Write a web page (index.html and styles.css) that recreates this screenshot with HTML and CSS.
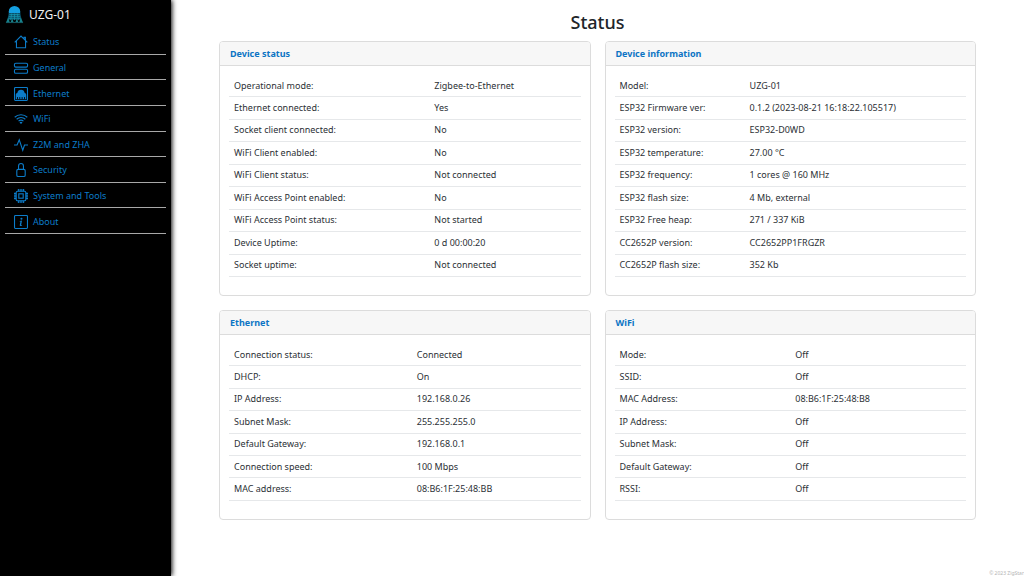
FILE: index.html
```html
<!DOCTYPE html>
<html lang="en">
<head>
<meta charset="utf-8">
<meta name="viewport" content="width=device-width, initial-scale=1">
<title>UZG-01 Status</title>
<link rel="stylesheet" href="styles.css">
</head>
<body>
<div class="app">
  <aside class="sidebar">
    <a class="brand" href="#">
      <svg class="brand-logo" viewBox="0 0 20 20" aria-hidden="true">
        <path d="M4 9V6.500a6 5.500 0 0 1 12 0V9z" fill="#149fe0"/>
        <path d="M4 8.500h12l1.500 7h-15z" fill="#0b4f68"/>
        <path d="M4.500 10h11M4 12h12M3.500 14h13M7 9l-1 7M10 9v7M13 9l1 7" stroke="#1595ad" stroke-width=".8" fill="none"/>
        <path d="M3.500 13L1 18.500h4zM16.500 13l2.500 5.500h-4zM7.500 14L6 18h3zM12.500 14l1.500 4h-3z" fill="#16808a"/>
        <path d="M1 18.500h18" stroke="#17606a"/>
      </svg>
      <span>UZG-01</span>
    </a>
    <nav>
      <ul class="menu">
        <li><a href="#"><svg class="icon" viewBox="0 0 16 16" aria-hidden="true"><path d="M.8 8.500L8 1.300l7.200 7.200M2.800 6.800V14.500h10.400V6.800M11.500 4.500V2.500h1.500v3.500"/></svg>Status</a></li>
        <li><a href="#"><svg class="icon" viewBox="0 0 16 16" aria-hidden="true"><rect x=".5" y="2.500" width="15" height="4.500" rx="1.500"/><rect x=".5" y="9.500" width="15" height="4.500" rx="1.500"/></svg>General</a></li>
        <li><a href="#"><svg class="icon" viewBox="0 0 16 16" aria-hidden="true"><rect x=".6" y=".6" width="14.800" height="14.800" rx="1"/><path class="solid" d="M2 14V9c0-1.300.8-2 1.800-2.200C4 4.300 5.800 3 8 3s4 1.300 4.200 3.800C13.200 7 14 7.700 14 9v5z"/><path class="cut" d="M4 11.500V14M6.600 11.500V14M9.300 11.500V14M12 11.500V14"/></svg>Ethernet</a></li>
        <li><a href="#"><svg class="icon" viewBox="0 0 16 16" aria-hidden="true"><path d="M.8 6a10.500 10.500 0 0 1 14.400 0M3 8.300a7.400 7.400 0 0 1 10 0M5.200 10.500a4.200 4.200 0 0 1 5.600 0"/><path class="solid" d="M6.300 12a2.400 2.400 0 0 1 3.400 0L8 13.800z"/></svg>WiFi</a></li>
        <li><a href="#"><svg class="icon" viewBox="0 0 16 16" aria-hidden="true"><path d="M0 8h3.500L6 2l4 12 2-6h4"/></svg>Z2M and ZHA</a></li>
        <li><a href="#"><svg class="icon" viewBox="0 0 16 16" aria-hidden="true"><rect x="3.200" y="7.300" width="9.600" height="8.200" rx="1.500"/><path d="M5.200 7.300V3.300a2.800 2.800 0 0 1 5.600 0v4"/></svg>Security</a></li>
        <li><a href="#"><svg class="icon" viewBox="0 0 16 16" aria-hidden="true"><rect x="2.500" y="2.500" width="11" height="11" rx="1.500"/><rect x="5.500" y="5.500" width="5" height="5"/><path d="M5 0v2.500M7 0v2.500M9 0v2.500M11 0v2.500M5 13.500V16M7 13.500V16M9 13.500V16M11 13.500V16M0 5h2.500M0 7h2.500M0 9h2.500M0 11h2.500M13.500 5H16M13.500 7H16M13.500 9H16M13.500 11H16"/></svg>System and Tools</a></li>
        <li><a href="#"><svg class="icon" viewBox="0 0 16 16" aria-hidden="true"><rect x=".6" y=".6" width="14.800" height="14.800" rx="1"/><path class="solid" d="M9.200 6.400l-1 4.700c-.1.400 0 .6.300.6.200 0 .5-.1.800-.3l-.1.800c-.3.300-.8.500-1.300.5-1 0-1.500-.4-1.300-1.300l.7-3.500c.1-.3 0-.4-.3-.5H6.400l.1-.6z"/><circle class="solid" cx="8.500" cy="4.200" r="1.200"/></svg>About</a></li>
      </ul>
    </nav>
  </aside>

  <main class="content">
    <h1 class="title">Status</h1>
    <div class="cards">
      <section class="card">
        <h2 class="card-header">Device status</h2>
        <div class="card-body">
          <table class="info info-tall">
            <colgroup><col class="label-wide"><col></colgroup>
            <tr><th scope="row">Operational mode:</th><td>Zigbee-to-Ethernet</td></tr>
            <tr><th scope="row">Ethernet connected:</th><td>Yes</td></tr>
            <tr><th scope="row">Socket client connected:</th><td>No</td></tr>
            <tr><th scope="row">WiFi Client enabled:</th><td>No</td></tr>
            <tr><th scope="row">WiFi Client status:</th><td>Not connected</td></tr>
            <tr><th scope="row">WiFi Access Point enabled:</th><td>No</td></tr>
            <tr><th scope="row">WiFi Access Point status:</th><td>Not started</td></tr>
            <tr><th scope="row">Device Uptime:</th><td>0 d 00:00:20</td></tr>
            <tr><th scope="row">Socket uptime:</th><td>Not connected</td></tr>
          </table>
        </div>
      </section>

      <section class="card">
        <h2 class="card-header">Device information</h2>
        <div class="card-body">
          <table class="info info-tall">
            <colgroup><col class="label-narrow"><col></colgroup>
            <tr><th scope="row">Model:</th><td>UZG-01</td></tr>
            <tr><th scope="row">ESP32 Firmware ver:</th><td>0.1.2 (2023-08-21 16:18:22.105517)</td></tr>
            <tr><th scope="row">ESP32 version:</th><td>ESP32-D0WD</td></tr>
            <tr><th scope="row">ESP32 temperature:</th><td>27.00 °C</td></tr>
            <tr><th scope="row">ESP32 frequency:</th><td>1 cores @ 160 MHz</td></tr>
            <tr><th scope="row">ESP32 flash size:</th><td>4 Mb, external</td></tr>
            <tr><th scope="row">ESP32 Free heap:</th><td>271 / 337 KiB</td></tr>
            <tr><th scope="row">CC2652P version:</th><td>CC2652PP1FRGZR</td></tr>
            <tr><th scope="row">CC2652P flash size:</th><td>352 Kb</td></tr>
          </table>
        </div>
      </section>

      <section class="card">
        <h2 class="card-header">Ethernet</h2>
        <div class="card-body">
          <table class="info">
            <colgroup><col class="label-medium"><col></colgroup>
            <tr><th scope="row">Connection status:</th><td>Connected</td></tr>
            <tr><th scope="row">DHCP:</th><td>On</td></tr>
            <tr><th scope="row">IP Address:</th><td>192.168.0.26</td></tr>
            <tr><th scope="row">Subnet Mask:</th><td>255.255.255.0</td></tr>
            <tr><th scope="row">Default Gateway:</th><td>192.168.0.1</td></tr>
            <tr><th scope="row">Connection speed:</th><td>100 Mbps</td></tr>
            <tr><th scope="row">MAC address:</th><td>08:B6:1F:25:48:BB</td></tr>
          </table>
        </div>
      </section>

      <section class="card">
        <h2 class="card-header">WiFi</h2>
        <div class="card-body">
          <table class="info">
            <colgroup><col class="label-half"><col></colgroup>
            <tr><th scope="row">Mode:</th><td>Off</td></tr>
            <tr><th scope="row">SSID:</th><td>Off</td></tr>
            <tr><th scope="row">MAC Address:</th><td>08:B6:1F:25:48:B8</td></tr>
            <tr><th scope="row">IP Address:</th><td>Off</td></tr>
            <tr><th scope="row">Subnet Mask:</th><td>Off</td></tr>
            <tr><th scope="row">Default Gateway:</th><td>Off</td></tr>
            <tr><th scope="row">RSSI:</th><td>Off</td></tr>
          </table>
        </div>
      </section>
    </div>
    <footer class="footer">© 2023 ZigStar</footer>
  </main>
</div>
</body>
</html>
```
FILE: styles.css
```css
* {
  box-sizing: border-box;
}

body {
  margin: 0;
  background: #fff;
  color: #2b3035;
  font-family: "Noto Sans", "Open Sans", sans-serif;
  font-size: 9px;
  line-height: 14px;
}

.app {
  display: flex;
  min-height: 100vh;
}

.sidebar {
  flex: 0 0 171px;
  padding: 0 5px;
  background: #000;
  box-shadow: 1px 0 5px #000;
}

.brand {
  display: flex;
  align-items: center;
  gap: 5px;
  height: 29px;
  color: #f2f2f2;
  font-size: 12px;
  text-decoration: none;
}

.brand-logo {
  width: 19px;
  height: 19px;
}

.menu {
  display: grid;
  grid-auto-rows: 1fr;
  height: 205px;
  margin: 0;
  padding: 0;
  list-style: none;
}

.menu li {
  display: flex;
  border-bottom: 1px solid #a8a8a8;
}

.menu a {
  display: flex;
  flex: 1;
  align-items: center;
  gap: 5px;
  padding: 2px 0 0 9px;
  color: #0c7cc9;
  text-decoration: none;
}

.icon {
  width: 14px;
  height: 14px;
  overflow: visible;
  fill: none;
  stroke: #0c7cc9;
  stroke-width: 1.25;
}

.icon .solid {
  fill: #0c7cc9;
  stroke: none;
}

.icon .cut {
  stroke: #000;
  stroke-width: 1;
}

.content {
  display: flex;
  flex: 1;
  flex-direction: column;
  min-width: 0;
  padding-top: 9px;
}

.title {
  margin: 0 0 6px;
  color: #212529;
  font-size: 18px;
  font-weight: 500;
  line-height: 26px;
  text-align: center;
}

.cards {
  display: grid;
  grid-template-columns: 1fr 1fr;
  gap: 14px;
  padding: 0 48px;
}

.card {
  border: 1px solid #dcdcdc;
  border-radius: 4px;
  background: #fff;
}

.card-header {
  margin: 0;
  padding: 5px 9px 4px 10px;
  border-bottom: 1px solid #dcdcdc;
  border-radius: 3px 3px 0 0;
  background: #f7f7f7;
  color: #0c74c4;
  font-size: 9px;
  font-weight: 700;
  line-height: 14px;
}

.card-body {
  padding: 9px 9px 18px;
}

.info {
  width: 100%;
  height: 157px;
  border-collapse: collapse;
  table-layout: fixed;
}

.info-tall {
  height: 202px;
}

.info th,
.info td {
  padding: 0 5px;
  border-bottom: 1px solid #e6e8ea;
  font-weight: 400;
  text-align: left;
  white-space: nowrap;
}

.label-wide {
  width: 57%;
}

.label-medium {
  width: 52%;
}

.label-half {
  width: 50%;
}

.label-narrow {
  width: 37%;
}

.footer {
  margin-top: auto;
  color: #b4b4b4;
  font-size: 5px;
  line-height: 6px;
  text-align: right;
}
```
